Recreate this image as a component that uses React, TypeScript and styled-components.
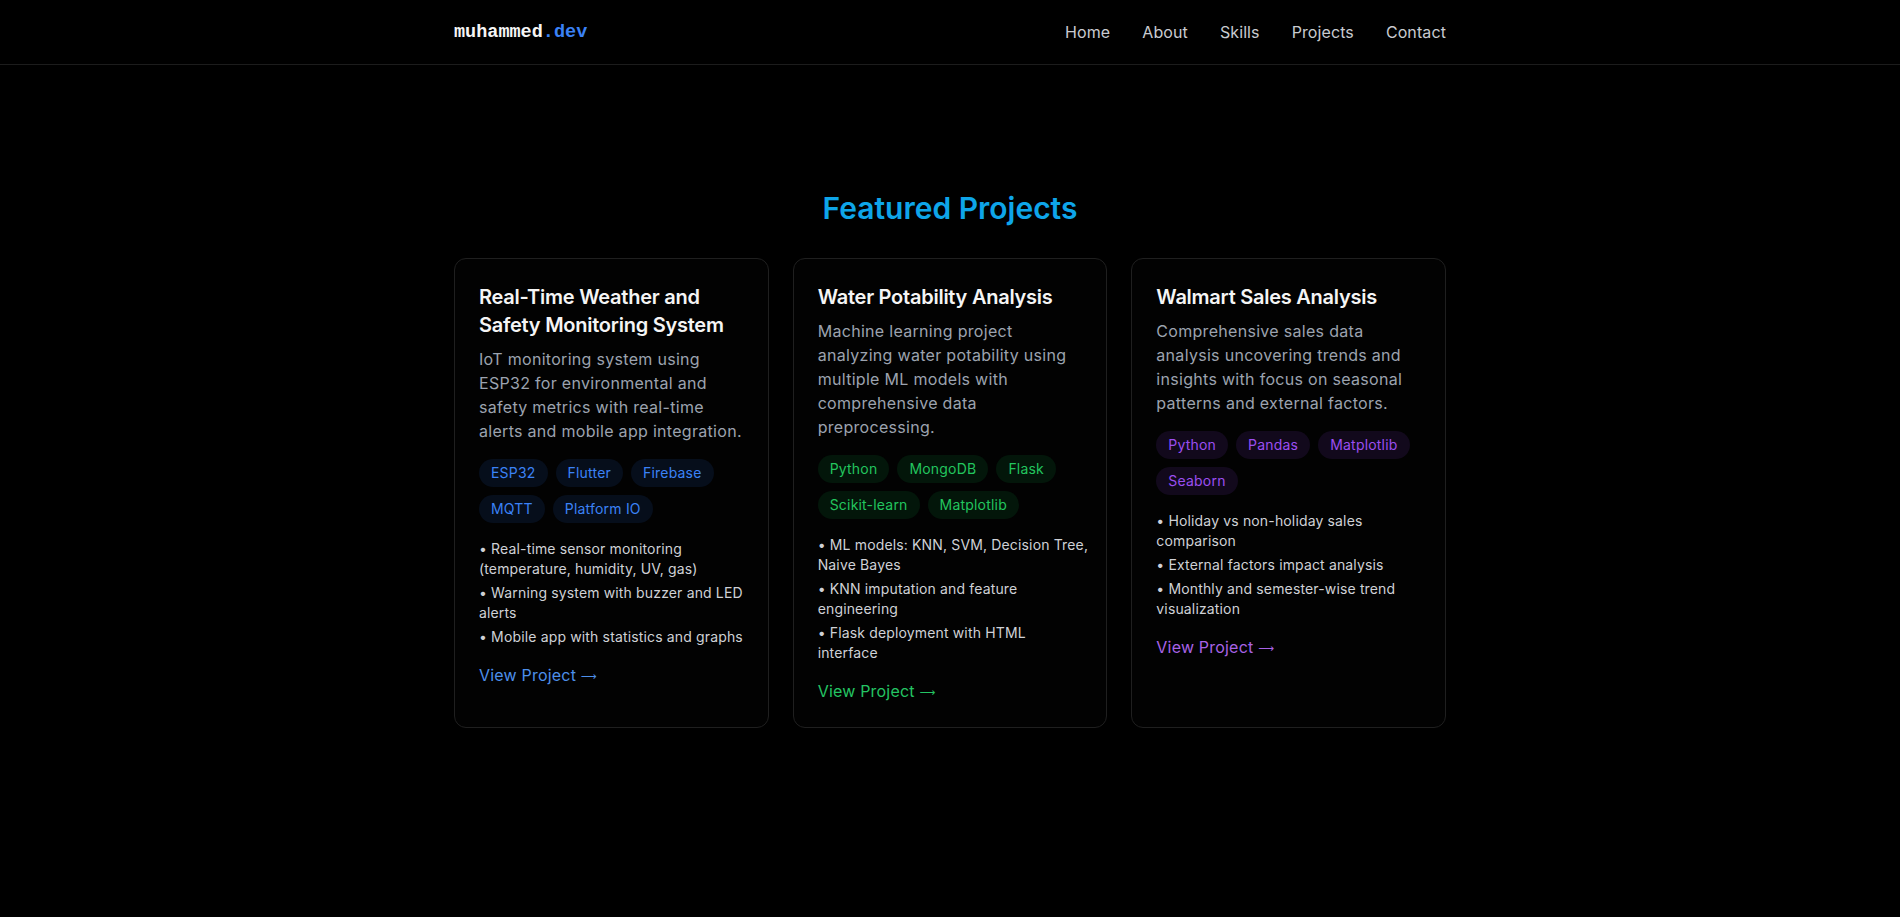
import React from "react";
import styled, { createGlobalStyle } from "styled-components";

const GlobalStyle = createGlobalStyle`
  * { box-sizing: border-box; }
  html, body { margin: 0; padding: 0; background: #000; }
  body {
    font-family: Inter, "Noto Sans", sans-serif;
    color: #f3f4f6;
    -webkit-font-smoothing: antialiased;
  }
`;

type Accent = "blue" | "green" | "purple";

const accents: Record<Accent, { tagBg: string; tagText: string; link: string }> = {
  blue: { tagBg: "rgb(6,14,27)", tagText: "#3b82f6", link: "#4d8fea" },
  green: { tagBg: "rgb(3,22,10)", tagText: "#22c55e", link: "#24c463" },
  purple: { tagBg: "rgb(18,9,28)", tagText: "#9b4ef0", link: "#a862e6" },
};

const Page = styled.div`
  min-height: 917px;
  background: #000;
`;

const Header = styled.header`
  height: 65px;
  border-bottom: 1px solid #1c1c1c;
`;

const Container = styled.div`
  max-width: 1024px;
  margin: 0 auto;
  padding: 0 16px;
`;

const NavBar = styled(Container)`
  height: 64px;
  display: flex;
  align-items: center;
  justify-content: space-between;
`;

const Logo = styled.div`
  font-family: "Liberation Mono", "DejaVu Sans Mono", monospace;
  font-weight: 700;
  font-size: 18.5px;
  color: #f5f5f5;
`;

const LogoAccent = styled.span`
  color: #3b82f6;
`;

const NavLinks = styled.nav`
  display: flex;
  gap: 32px;
`;

const NavLink = styled.a`
  font-size: 16px;
  color: #c9cbd0;
  text-decoration: none;
  letter-spacing: 0.1px;
`;

const Section = styled.section`
  padding-top: 125px;
`;

const Heading = styled.h2`
  margin: 0 0 32px;
  text-align: center;
  font-size: 30px;
  line-height: 36px;
  font-weight: 600;
  color: #0ea5e9;
`;

const Grid = styled.div`
  display: grid;
  grid-template-columns: repeat(3, minmax(0, 1fr));
  gap: 24px;
`;

const Card = styled.article`
  min-width: 0;
  border: 1px solid #1f1f1f;
  border-radius: 12px;
  padding: 24px;
  background: #020202;
`;

const Title = styled.h3`
  margin: 0 0 8px;
  font-size: 20px;
  line-height: 28px;
  font-weight: 600;
  color: #f5f5f5;
  letter-spacing: -0.25px;
  white-space: nowrap;
`;

const Desc = styled.p`
  margin: 0 0 16px;
  font-size: 16px;
  line-height: 24px;
  color: #9ca3af;
  letter-spacing: 0.3px;
  white-space: nowrap;
`;

const Tags = styled.div`
  display: flex;
  flex-wrap: wrap;
  gap: 8px;
  margin-bottom: 16px;
`;

const Tag = styled.span<{ $accent: Accent }>`
  display: inline-block;
  padding: 4px 12px;
  border-radius: 999px;
  font-size: 14px;
  line-height: 20px;
  letter-spacing: 0.2px;
  background: ${(p) => accents[p.$accent].tagBg};
  color: ${(p) => accents[p.$accent].tagText};
`;

const Bullets = styled.ul`
  list-style: none;
  margin: 0 0 16px;
  padding: 0;
  display: flex;
  flex-direction: column;
  gap: 4px;
`;

const Bullet = styled.li`
  font-size: 14px;
  line-height: 20px;
  letter-spacing: 0.15px;
  color: #cfd1d6;
  white-space: nowrap;
`;

const ViewLink = styled.a<{ $accent: Accent }>`
  display: inline-flex;
  align-items: center;
  gap: 5px;
  height: 24px;
  font-size: 16px;
  line-height: 24px;
  letter-spacing: 0.2px;
  color: ${(p) => accents[p.$accent].link};
  text-decoration: none;
`;

const Arrow = styled.span`
  font-family: "DejaVu Sans", sans-serif;
  font-size: 11px;
  line-height: 1;
  letter-spacing: 0;
  transform: translateY(1px);
`;

type Project = {
  title: string[];
  desc: string[];
  tags: string[];
  bullets: string[][];
  accent: Accent;
};

const projects: Project[] = [
  {
    title: ["Real-Time Weather and", "Safety Monitoring System"],
    desc: [
      "IoT monitoring system using",
      "ESP32 for environmental and",
      "safety metrics with real-time",
      "alerts and mobile app integration.",
    ],
    tags: ["ESP32", "Flutter", "Firebase", "MQTT", "Platform IO"],
    bullets: [
      ["Real-time sensor monitoring", "(temperature, humidity, UV, gas)"],
      ["Warning system with buzzer and LED", "alerts"],
      ["Mobile app with statistics and graphs"],
    ],
    accent: "blue",
  },
  {
    title: ["Water Potability Analysis"],
    desc: [
      "Machine learning project",
      "analyzing water potability using",
      "multiple ML models with",
      "comprehensive data",
      "preprocessing.",
    ],
    tags: ["Python", "MongoDB", "Flask", "Scikit-learn", "Matplotlib"],
    bullets: [
      ["ML models: KNN, SVM, Decision Tree,", "Naive Bayes"],
      ["KNN imputation and feature", "engineering"],
      ["Flask deployment with HTML", "interface"],
    ],
    accent: "green",
  },
  {
    title: ["Walmart Sales Analysis"],
    desc: [
      "Comprehensive sales data",
      "analysis uncovering trends and",
      "insights with focus on seasonal",
      "patterns and external factors.",
    ],
    tags: ["Python", "Pandas", "Matplotlib", "Seaborn"],
    bullets: [
      ["Holiday vs non-holiday sales", "comparison"],
      ["External factors impact analysis"],
      ["Monthly and semester-wise trend", "visualization"],
    ],
    accent: "purple",
  },
];

function Lines({ lines }: { lines: string[] }) {
  return (
    <>
      {lines.map((l, i) => (
        <React.Fragment key={i}>
          {i > 0 && <br />}
          {l}
        </React.Fragment>
      ))}
    </>
  );
}

export default function App() {
  return (
    <Page>
      <GlobalStyle />
      <Header>
        <NavBar>
          <Logo>
            muhammed<LogoAccent>.dev</LogoAccent>
          </Logo>
          <NavLinks>
            {["Home", "About", "Skills", "Projects", "Contact"].map((l) => (
              <NavLink key={l} href="#">
                {l}
              </NavLink>
            ))}
          </NavLinks>
        </NavBar>
      </Header>
      <Section>
        <Container>
          <Heading>Featured Projects</Heading>
          <Grid>
            {projects.map((p) => (
              <Card key={p.title.join(" ")}>
                <Title>
                  <Lines lines={p.title} />
                </Title>
                <Desc>
                  <Lines lines={p.desc} />
                </Desc>
                <Tags>
                  {p.tags.map((t) => (
                    <Tag key={t} $accent={p.accent}>
                      {t}
                    </Tag>
                  ))}
                </Tags>
                <Bullets>
                  {p.bullets.map((b) => (
                    <Bullet key={b[0]}>
                      <Lines lines={["• " + b[0], ...b.slice(1)]} />
                    </Bullet>
                  ))}
                </Bullets>
                <ViewLink href="#" $accent={p.accent}>
                  View Project <Arrow>⟶</Arrow>
                </ViewLink>
              </Card>
            ))}
          </Grid>
        </Container>
      </Section>
    </Page>
  );
}
